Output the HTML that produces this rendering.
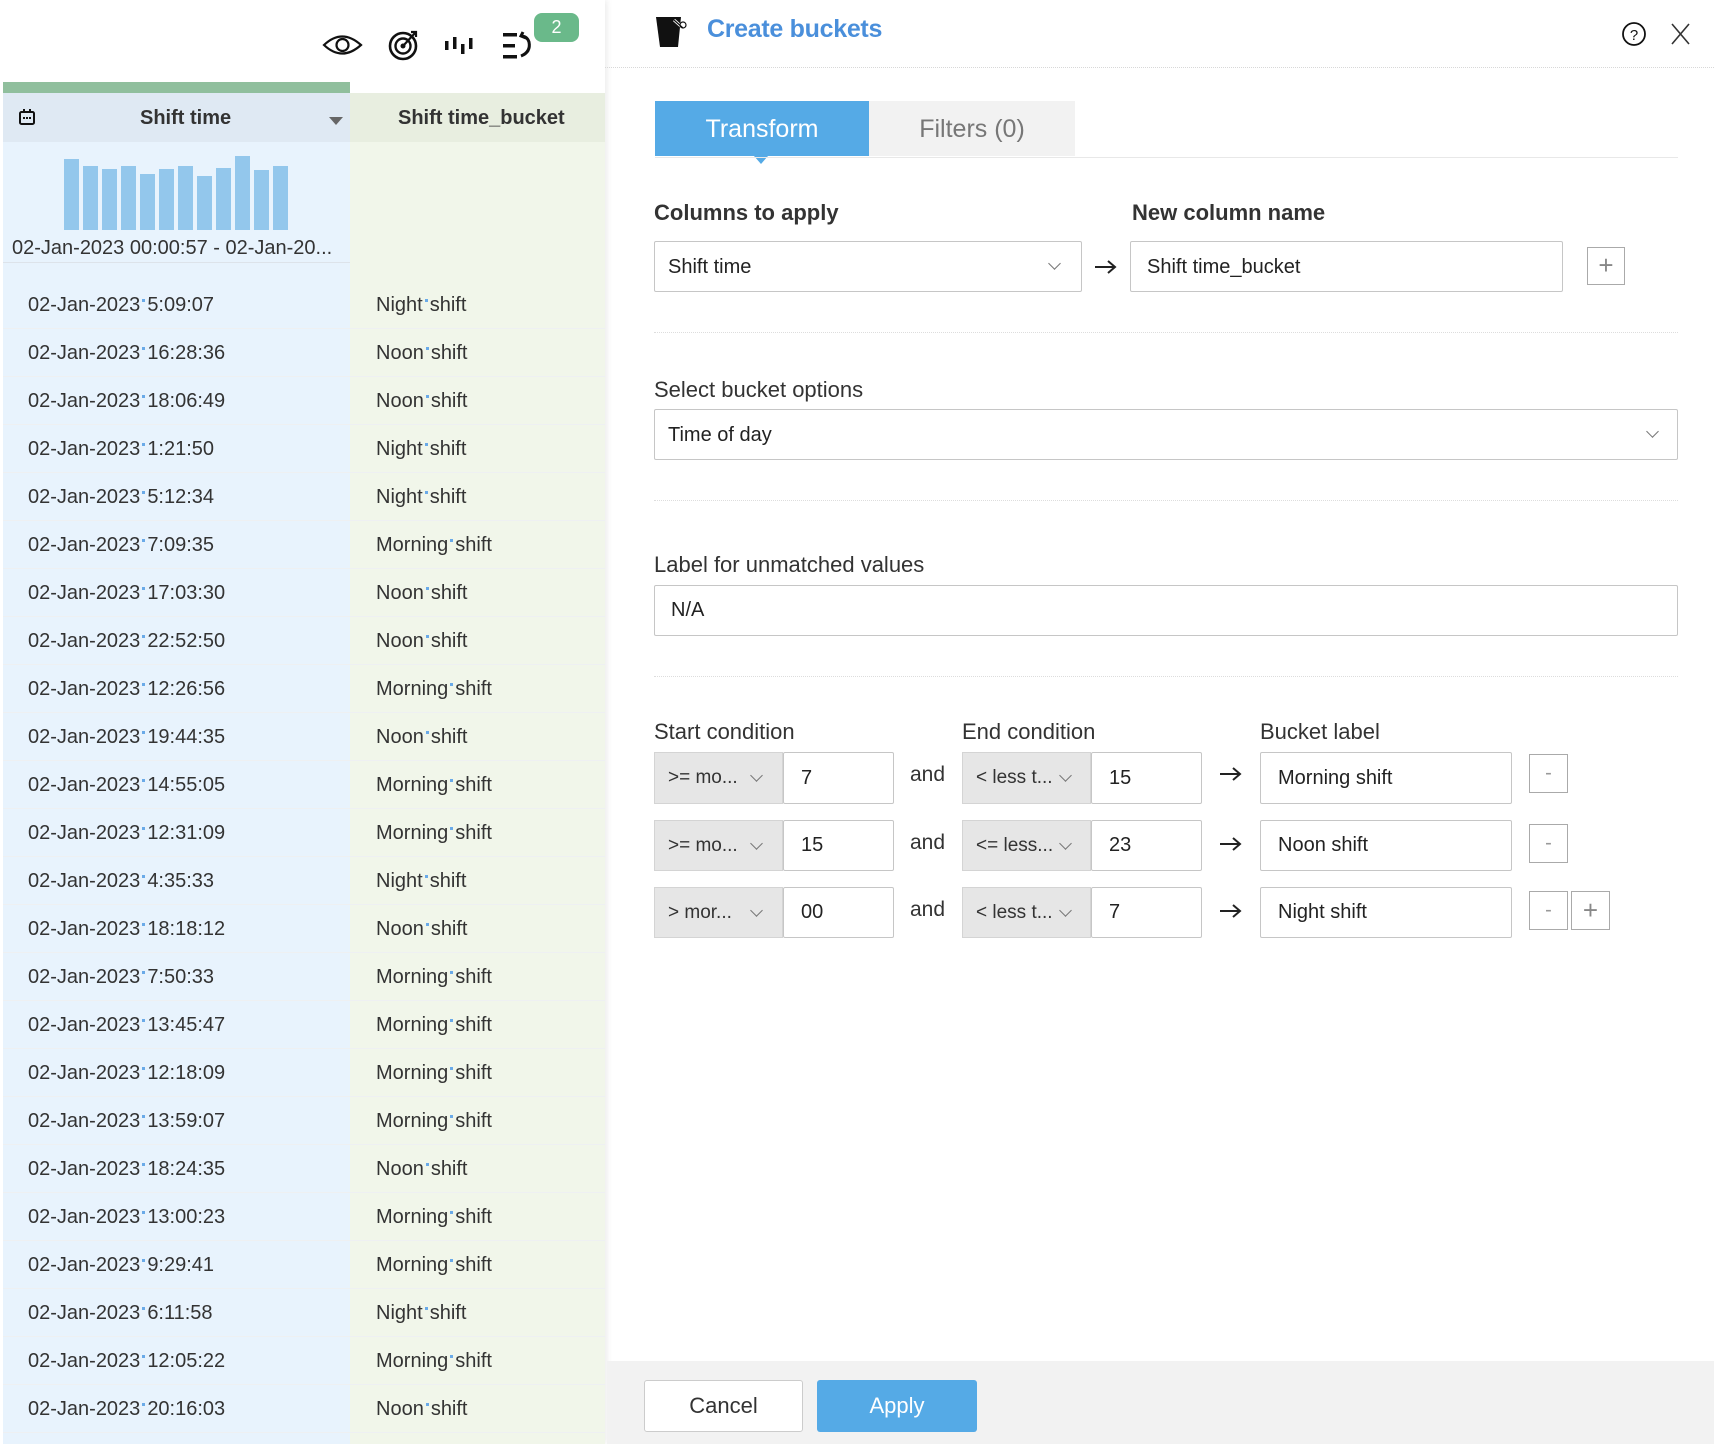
<!DOCTYPE html>
<html><head><meta charset="utf-8"><style>
*{box-sizing:border-box;margin:0;padding:0}
body{width:1714px;height:1444px;overflow:hidden;background:#fff;font-family:"Liberation Sans",sans-serif;color:#222;position:relative}
.a{position:absolute}
.row{position:absolute;left:3px;width:602px;height:48px;border-bottom:1px solid #eef0f2}
.row .l{position:absolute;left:25px;top:0;line-height:48px;font-size:20px;color:#333}
.row .r{position:absolute;left:373px;top:0;line-height:48px;font-size:20px;color:#333}
.dot{display:inline-block;width:3px;height:3px;background:#6aaae8;margin:0 2px;vertical-align:9px}
.box{position:absolute;border:1px solid #c6c6c6;background:#fff;border-radius:2px;font-size:20px;color:#222;padding-left:13px;display:flex;align-items:center}
.gsel{position:absolute;background:#e6e6e6;border:1px solid #d4d4d4;font-size:19px;color:#333;padding-left:13px;display:flex;align-items:center}
.lbl{position:absolute;font-size:22px;color:#333}
.chev{position:absolute;width:9px;height:9px;border-right:1.5px solid #777;border-bottom:1.5px solid #777;transform:rotate(45deg)}
.hr{position:absolute;left:654px;width:1024px;border-top:1px dotted #ddd}
.sb{position:absolute;border:1px solid #aaa;background:#fff;color:#999;font-size:20px;text-align:center}
.arr{position:absolute}
</style></head><body>
<div class="a" style="left:0;top:0;width:605px;height:1444px;background:#fff;box-shadow:2px 0 6px rgba(0,0,0,0.08)"></div>
<svg class="a" style="left:318px;top:28px" width="240" height="36" viewBox="0 0 240 36">
<path d="M6 17 Q24 0 43 17 Q24 34 6 17Z" fill="none" stroke="#111" stroke-width="2.2"/>
<circle cx="24.5" cy="17" r="6" fill="none" stroke="#111" stroke-width="2.2"/>
<circle cx="85" cy="18" r="13" fill="none" stroke="#111" stroke-width="2.6"/>
<circle cx="85" cy="18" r="7.5" fill="none" stroke="#111" stroke-width="2.4"/>
<circle cx="85" cy="18" r="2.5" fill="#111"/>
<path d="M85 18 L97 5 M93 4 L98 4 L98 9" fill="none" stroke="#111" stroke-width="2.2"/>
<rect x="127" y="13" width="3.5" height="9" fill="#111"/><rect x="135" y="9" width="3.5" height="12" fill="#111"/>
<rect x="143" y="16" width="3.5" height="10" fill="#111"/><rect x="151" y="10" width="3.5" height="11" fill="#111"/>
<rect x="185" y="5" width="14" height="3.5" fill="#111"/><rect x="185" y="16" width="12" height="3.5" fill="#111"/><rect x="185" y="27" width="14" height="3.5" fill="#111"/>
<path d="M203 28 Q213 24 211 14 Q209 8 203 8 M205 4 L203 8 L208 10" fill="none" stroke="#111" stroke-width="3"/>
</svg>
<div class="a" style="left:534px;top:13px;width:45px;height:29px;background:#6ab98a;border-radius:8px;color:#fff;font-size:18px;text-align:center;line-height:29px">2</div>
<div class="a" style="left:3px;top:82px;width:347px;height:11px;background:#90bf9d"></div>
<div class="a" style="left:3px;top:93px;width:347px;height:49px;background:#dfe9f3"></div>
<div class="a" style="left:350px;top:93px;width:255px;height:49px;background:#e8eee0"></div>
<svg class="a" style="left:18px;top:109px" width="18" height="17" viewBox="0 0 18 17"><rect x="2" y="3" width="14" height="12" rx="1.5" fill="none" stroke="#111" stroke-width="2"/><rect x="5" y="0" width="2" height="4" fill="#111"/><rect x="11" y="0" width="2" height="4" fill="#111"/><rect x="5" y="8" width="2" height="2" fill="#111"/><rect x="8" y="8" width="2" height="2" fill="#111"/><rect x="11" y="8" width="2" height="2" fill="#111"/></svg>
<div class="a" style="left:140px;top:107px;font-size:20px;font-weight:bold;color:#333">Shift time</div>
<div class="a" style="left:329px;top:117px;width:0;height:0;border-left:7px solid transparent;border-right:7px solid transparent;border-top:8px solid #666"></div>
<div class="a" style="left:398px;top:107px;font-size:20px;font-weight:bold;color:#333">Shift time_bucket</div>
<div class="a" style="left:3px;top:142px;width:347px;height:121px;background:#e8f3fd;border-bottom:1px solid #dde3ea"></div>
<div class="a" style="left:350px;top:142px;width:255px;height:121px;background:#f1f6ea"></div>
<svg class="a" style="left:64px;top:150px" width="230" height="80">
<g fill="#93c7ec">
<rect x="0" y="9" width="15" height="71"/><rect x="19" y="16" width="15" height="64"/><rect x="38" y="19" width="15" height="61"/><rect x="57" y="16" width="15" height="64"/><rect x="76" y="24" width="15" height="56"/><rect x="95" y="19" width="15" height="61"/><rect x="114" y="16" width="15" height="64"/><rect x="133" y="26" width="15" height="54"/><rect x="152" y="18" width="15" height="62"/><rect x="171" y="6" width="15" height="74"/><rect x="190" y="20" width="15" height="60"/><rect x="209" y="16" width="15" height="64"/>
</g></svg>
<div class="a" style="left:12px;top:237px;font-size:20px;color:#333;white-space:nowrap">02-Jan-2023 00:00:57 - 02-Jan-20...</div>
<div class="a" style="left:3px;top:263px;width:347px;height:1181px;background:#e8f3fd"></div>
<div class="a" style="left:350px;top:263px;width:255px;height:1181px;background:#f1f6ea"></div>
<div class="row" style="top:281px"><span class="l">02-Jan-2023<span class="dot"></span>5:09:07</span><span class="r">Night<span class="dot"></span>shift</span></div>
<div class="row" style="top:329px"><span class="l">02-Jan-2023<span class="dot"></span>16:28:36</span><span class="r">Noon<span class="dot"></span>shift</span></div>
<div class="row" style="top:377px"><span class="l">02-Jan-2023<span class="dot"></span>18:06:49</span><span class="r">Noon<span class="dot"></span>shift</span></div>
<div class="row" style="top:425px"><span class="l">02-Jan-2023<span class="dot"></span>1:21:50</span><span class="r">Night<span class="dot"></span>shift</span></div>
<div class="row" style="top:473px"><span class="l">02-Jan-2023<span class="dot"></span>5:12:34</span><span class="r">Night<span class="dot"></span>shift</span></div>
<div class="row" style="top:521px"><span class="l">02-Jan-2023<span class="dot"></span>7:09:35</span><span class="r">Morning<span class="dot"></span>shift</span></div>
<div class="row" style="top:569px"><span class="l">02-Jan-2023<span class="dot"></span>17:03:30</span><span class="r">Noon<span class="dot"></span>shift</span></div>
<div class="row" style="top:617px"><span class="l">02-Jan-2023<span class="dot"></span>22:52:50</span><span class="r">Noon<span class="dot"></span>shift</span></div>
<div class="row" style="top:665px"><span class="l">02-Jan-2023<span class="dot"></span>12:26:56</span><span class="r">Morning<span class="dot"></span>shift</span></div>
<div class="row" style="top:713px"><span class="l">02-Jan-2023<span class="dot"></span>19:44:35</span><span class="r">Noon<span class="dot"></span>shift</span></div>
<div class="row" style="top:761px"><span class="l">02-Jan-2023<span class="dot"></span>14:55:05</span><span class="r">Morning<span class="dot"></span>shift</span></div>
<div class="row" style="top:809px"><span class="l">02-Jan-2023<span class="dot"></span>12:31:09</span><span class="r">Morning<span class="dot"></span>shift</span></div>
<div class="row" style="top:857px"><span class="l">02-Jan-2023<span class="dot"></span>4:35:33</span><span class="r">Night<span class="dot"></span>shift</span></div>
<div class="row" style="top:905px"><span class="l">02-Jan-2023<span class="dot"></span>18:18:12</span><span class="r">Noon<span class="dot"></span>shift</span></div>
<div class="row" style="top:953px"><span class="l">02-Jan-2023<span class="dot"></span>7:50:33</span><span class="r">Morning<span class="dot"></span>shift</span></div>
<div class="row" style="top:1001px"><span class="l">02-Jan-2023<span class="dot"></span>13:45:47</span><span class="r">Morning<span class="dot"></span>shift</span></div>
<div class="row" style="top:1049px"><span class="l">02-Jan-2023<span class="dot"></span>12:18:09</span><span class="r">Morning<span class="dot"></span>shift</span></div>
<div class="row" style="top:1097px"><span class="l">02-Jan-2023<span class="dot"></span>13:59:07</span><span class="r">Morning<span class="dot"></span>shift</span></div>
<div class="row" style="top:1145px"><span class="l">02-Jan-2023<span class="dot"></span>18:24:35</span><span class="r">Noon<span class="dot"></span>shift</span></div>
<div class="row" style="top:1193px"><span class="l">02-Jan-2023<span class="dot"></span>13:00:23</span><span class="r">Morning<span class="dot"></span>shift</span></div>
<div class="row" style="top:1241px"><span class="l">02-Jan-2023<span class="dot"></span>9:29:41</span><span class="r">Morning<span class="dot"></span>shift</span></div>
<div class="row" style="top:1289px"><span class="l">02-Jan-2023<span class="dot"></span>6:11:58</span><span class="r">Night<span class="dot"></span>shift</span></div>
<div class="row" style="top:1337px"><span class="l">02-Jan-2023<span class="dot"></span>12:05:22</span><span class="r">Morning<span class="dot"></span>shift</span></div>
<div class="row" style="top:1385px"><span class="l">02-Jan-2023<span class="dot"></span>20:16:03</span><span class="r">Noon<span class="dot"></span>shift</span></div>

<svg class="a" style="left:655px;top:16px" width="32" height="32" viewBox="0 0 32 32"><path d="M1 1 L26 1 L23 31 L5 31Z" fill="#111"/><path d="M19 4 L28 12" stroke="#fff" stroke-width="3"/><path d="M19 4 L28 12" stroke="#111" stroke-width="1.2"/><circle cx="28" cy="9" r="3" fill="none" stroke="#111" stroke-width="1.2"/></svg>
<div class="a" style="left:707px;top:15px;font-size:25px;font-weight:bold;color:#4a8fdb;letter-spacing:-0.3px">Create buckets</div>
<svg class="a" style="left:1622px;top:21px" width="70" height="28" viewBox="0 0 70 28"><ellipse cx="12" cy="13" rx="11" ry="11" fill="none" stroke="#111" stroke-width="1.8"/><text x="12" y="19" font-size="15" text-anchor="middle" font-family="Liberation Sans" fill="#111">?</text><path d="M50 3 L67 23 M67 3 L50 23" stroke="#333" stroke-width="1.6"/></svg>
<div class="a" style="left:605px;top:67px;width:1109px;border-top:1px dotted #d8d8d8"></div>
<div class="a" style="left:655px;top:101px;width:214px;height:55px;background:#55aae6;color:#fff;font-size:25px;text-align:center;line-height:57px">Transform</div>
<div class="a" style="left:754px;top:156px;width:0;height:0;border-left:7px solid transparent;border-right:7px solid transparent;border-top:8px solid #55aae6"></div>
<div class="a" style="left:869px;top:101px;width:206px;height:55px;background:#f2f2f2;color:#777;font-size:25px;text-align:center;line-height:57px">Filters (0)</div>
<div class="a" style="left:655px;top:157px;width:1023px;border-top:1px solid #e8e8e8"></div>
<div class="lbl" style="left:654px;top:200px;font-weight:bold">Columns to apply</div>
<div class="lbl" style="left:1132px;top:200px;font-weight:bold">New column name</div>
<div class="box" style="left:654px;top:241px;width:428px;height:51px;padding-top:2px">Shift time</div>
<div class="chev" style="left:1050px;top:259px"></div>
<svg class="arr" style="left:1094px;top:259px" width="24" height="16"><path d="M1 8 H21 M14 2 L21 8 L14 14" fill="none" stroke="#222" stroke-width="2"/></svg>
<div class="box" style="left:1130px;top:241px;width:433px;height:51px;padding-left:16px;padding-top:2px">Shift time_bucket</div>
<div class="sb" style="left:1587px;top:247px;width:38px;height:38px;line-height:34px;font-size:26px;color:#888">+</div>
<div class="hr" style="top:332px"></div>
<div class="lbl" style="left:654px;top:377px">Select bucket options</div>
<div class="box" style="left:654px;top:409px;width:1024px;height:51px;padding-top:2px">Time of day</div>
<div class="chev" style="left:1648px;top:427px"></div>
<div class="hr" style="top:500px"></div>
<div class="lbl" style="left:654px;top:552px">Label for unmatched values</div>
<div class="box" style="left:654px;top:585px;width:1024px;height:51px;padding-left:16px">N/A</div>
<div class="hr" style="top:676px"></div>
<div class="lbl" style="left:654px;top:719px">Start condition</div>
<div class="lbl" style="left:962px;top:719px">End condition</div>
<div class="lbl" style="left:1260px;top:719px">Bucket label</div>

<div class="gsel" style="left:654px;top:752px;width:129px;height:52px">&gt;= mo...</div><div class="chev" style="left:752px;top:771px"></div>
<div class="box" style="left:783px;top:752px;width:111px;height:52px;padding-left:17px">7</div>
<div class="a" style="left:910px;top:763px;font-size:21px;color:#333">and</div>
<div class="gsel" style="left:962px;top:752px;width:129px;height:52px">&lt; less t...</div><div class="chev" style="left:1061px;top:771px"></div>
<div class="box" style="left:1091px;top:752px;width:111px;height:52px;padding-left:17px">15</div>
<svg class="arr" style="left:1219px;top:766px" width="24" height="16"><path d="M1 8 H21 M14 2 L21 8 L14 14" fill="none" stroke="#222" stroke-width="2"/></svg>
<div class="box" style="left:1260px;top:752px;width:252px;height:52px;padding-left:17px">Morning shift</div>
<div class="sb" style="left:1529px;top:754px;width:39px;height:39px;line-height:36px">-</div>

<div class="gsel" style="left:654px;top:820px;width:129px;height:51px">&gt;= mo...</div><div class="chev" style="left:752px;top:839px"></div>
<div class="box" style="left:783px;top:820px;width:111px;height:51px;padding-left:17px">15</div>
<div class="a" style="left:910px;top:831px;font-size:21px;color:#333">and</div>
<div class="gsel" style="left:962px;top:820px;width:129px;height:51px">&lt;= less...</div><div class="chev" style="left:1061px;top:839px"></div>
<div class="box" style="left:1091px;top:820px;width:111px;height:51px;padding-left:17px">23</div>
<svg class="arr" style="left:1219px;top:836px" width="24" height="16"><path d="M1 8 H21 M14 2 L21 8 L14 14" fill="none" stroke="#222" stroke-width="2"/></svg>
<div class="box" style="left:1260px;top:820px;width:252px;height:51px;padding-left:17px">Noon shift</div>
<div class="sb" style="left:1529px;top:824px;width:39px;height:39px;line-height:36px">-</div>

<div class="gsel" style="left:654px;top:887px;width:129px;height:51px">&gt; mor...</div><div class="chev" style="left:752px;top:906px"></div>
<div class="box" style="left:783px;top:887px;width:111px;height:51px;padding-left:17px">00</div>
<div class="a" style="left:910px;top:898px;font-size:21px;color:#333">and</div>
<div class="gsel" style="left:962px;top:887px;width:129px;height:51px">&lt; less t...</div><div class="chev" style="left:1061px;top:906px"></div>
<div class="box" style="left:1091px;top:887px;width:111px;height:51px;padding-left:17px">7</div>
<svg class="arr" style="left:1219px;top:903px" width="24" height="16"><path d="M1 8 H21 M14 2 L21 8 L14 14" fill="none" stroke="#222" stroke-width="2"/></svg>
<div class="box" style="left:1260px;top:887px;width:252px;height:51px;padding-left:17px">Night shift</div>
<div class="sb" style="left:1529px;top:891px;width:39px;height:39px;line-height:36px">-</div>
<div class="sb" style="left:1571px;top:891px;width:39px;height:39px;line-height:36px;font-size:26px;color:#888">+</div>
<div class="a" style="left:607px;top:1361px;width:1107px;height:83px;background:#f2f2f2"></div>
<div class="a" style="left:644px;top:1380px;width:159px;height:52px;background:#fff;border:1px solid #ccc;border-radius:3px;font-size:22px;color:#333;text-align:center;line-height:50px">Cancel</div>
<div class="a" style="left:817px;top:1380px;width:160px;height:52px;background:#55aae6;border-radius:3px;font-size:22px;color:#fff;text-align:center;line-height:52px">Apply</div>
</body></html>
